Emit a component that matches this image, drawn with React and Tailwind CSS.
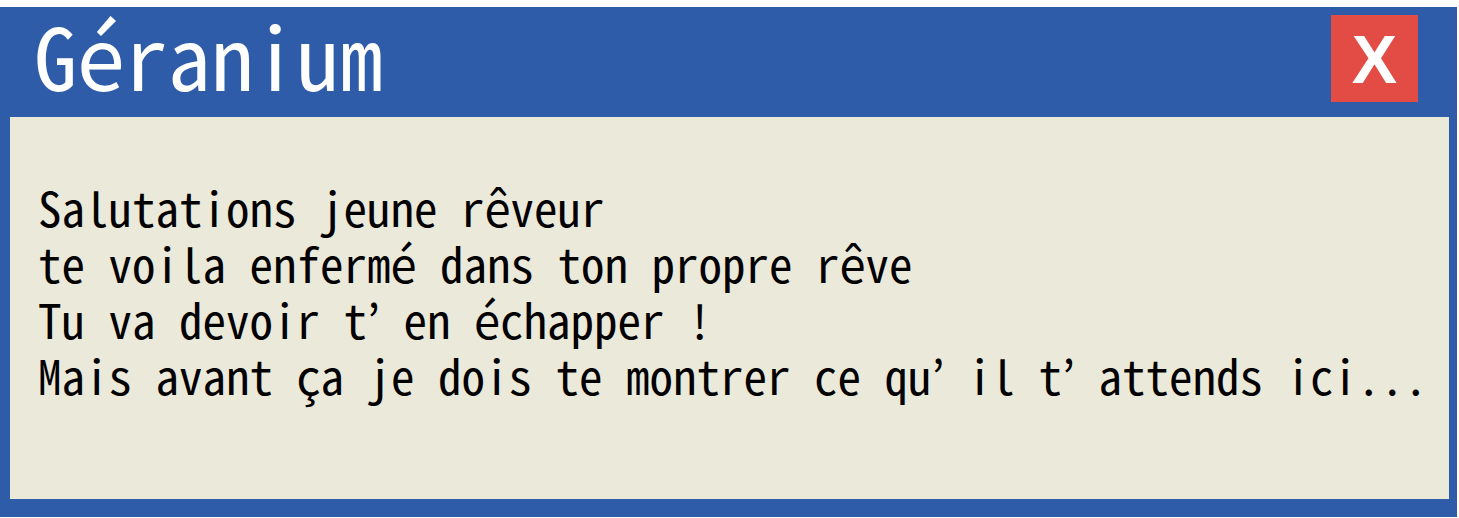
import React from "react";

const lines = [
  "Salutations jeune rêveur",
  "te voila enfermé dans ton propre rêve",
  "Tu va devoir t’ en échapper !",
  "Mais avant ça je dois te montrer ce qu’ il t’ attends ici...",
];

const mono = {
  fontFamily:
    '"Noto Sans Mono CJK JP", "Noto Sans CJK JP", "Liberation Mono", monospace',
};

const App = () => {
  return (
    <div className="w-[1459px] h-[518px] bg-white pt-[7px]">
      <div className="w-[1457px] h-[510px] bg-[#2e5ca8] flex flex-col">
        <div className="h-[110px] flex items-start justify-between pl-[34px] pr-[39px]">
          <h1
            className="text-white text-[86px] leading-none pt-[4px]"
            style={mono}
          >
            Géranium
          </h1>
          <button className="mt-[8px] w-[87px] h-[87px] bg-[#e34c45] flex items-center justify-center text-white text-[68px] font-bold leading-none font-['Liberation_Sans',sans-serif]">
            X
          </button>
        </div>
        <div className="ml-[10px] w-[1439px] h-[382px] bg-[#ebe9d9] pl-[28px] pt-[62px]">
          <div className="text-black text-[47px] leading-[56px]" style={mono}>
            {lines.map((l) => (
              <p key={l} className="whitespace-pre">
                {l}
              </p>
            ))}
          </div>
        </div>
      </div>
    </div>
  );
};

export default App;
